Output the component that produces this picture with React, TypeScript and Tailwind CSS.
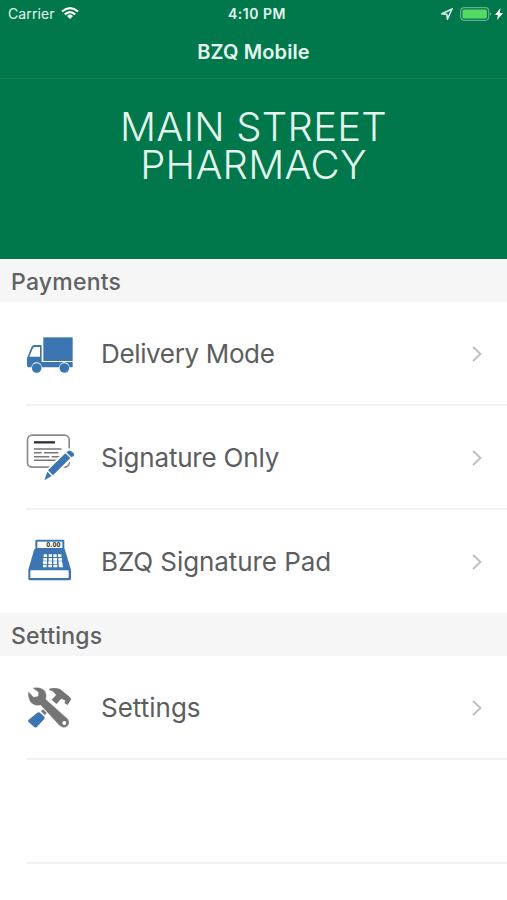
import React from "react";

const TruckIcon = () => (
  <svg viewBox="0 0 156 156" className="h-[52px] w-[52px]">
    <rect x="58" y="28" width="88" height="71" fill="#3b76b3" />
    <path
      d="M58 102H146V118H137C135 108 129 103 121 103C113 103 107 108 105 118H54C52 108 46 103 38 103C30 103 24 108 22 118H12L9 114V91L22 58Q25 51 31 51H50Q53 51 53 54V102Z"
      fill="#3b76b3"
    />
    <path d="M16 86L26 62Q28 57 32 57H48V86Z" fill="#fff" />
    <circle cx="38" cy="120" r="14.500" fill="#3b76b3" />
    <circle cx="121" cy="120" r="14.500" fill="#3b76b3" />
  </svg>
);

const SignatureIcon = () => (
  <svg viewBox="0 0 156 156" className="h-[52px] w-[52px]">
    <rect x="10.500" y="9.500" width="125" height="96" rx="14" fill="#fff" stroke="#8b8b8b" strokeWidth="5" />
    <path d="M30 31H93" stroke="#333" strokeWidth="7" />
    <path d="M30 51H112M30 62H53M60 62H103M30 74H76M83 74H108M30 85H101" stroke="#777" strokeWidth="4.500" />
    <path d="M59 145L69 115L128 53Q140 48 151 60Q155 68 149 75L84 136Z" fill="#fff" stroke="#fff" strokeWidth="5" />
    <path d="M61 145L70 119L83 132Z" fill="#3b76b3" />
    <path d="M72 115L124 64L139 78L87 130Z" fill="#3b76b3" />
    <path d="M127 61L134 56Q139 54 146 61Q153 67 149 72L142 76Z" fill="#3b76b3" />
  </svg>
);

const RegisterIcon = () => (
  <svg viewBox="0 0 156 156" className="h-[52px] w-[52px]">
    <rect x="34" y="11" width="87" height="32" rx="4" fill="#3b76b3" />
    <rect x="40" y="17" width="75" height="19" fill="#fff" />
    <text
      x="67"
      y="34"
      fontSize="20"
      fontWeight="700"
      fill="#333"
      textLength="43"
      lengthAdjust="spacingAndGlyphs"
      className="font-['DejaVu_Sans',sans-serif]"
    >
      0.00
    </text>
    <path d="M31 39H122L141 101V128Q141 133 136 133H18Q13 133 13 128V101Z" fill="#3b76b3" />
    <rect x="19" y="103" width="115" height="23" rx="2" fill="#fff" />
    <path
      d="M59 59H69M74 59H84M88 59H98M102 59H112M58 70H69M74 70H84M88 70H99M103 70H114M57 80H69M73 80H84M88 80H99M57 90H68M73 90H84M88 90H100"
      stroke="#fff"
      strokeWidth="8"
    />
    <path d="M103 76H114L117 94H105Z" fill="#fff" />
  </svg>
);

const ToolsIcon = () => (
  <svg viewBox="0 0 156 156" className="h-[52px] w-[52px]">
    <path
      d="M76 20Q92 15 108 21L130 39L134 42L142 51L131 69L122 64L123 55L112 50L97 66L83 53L96 39Q89 27 76 25Z"
      fill="#757575"
    />
    <path
      d="M25 18Q47 11 62 25Q71 38 66 52L132 111Q141 123 129 134Q118 141 107 132L50 70Q31 75 18 59Q9 44 13 28L29 45L42 42L43 31Z"
      fill="#757575"
      stroke="#fff"
      strokeWidth="1.500"
    />
    <circle cx="121" cy="123" r="6" fill="#fff" />
    <path d="M51 88L57 82L68 93L62 99Z" fill="#757575" />
    <path d="M38 94Q43 89 48 92L61 104Q64 108 60 112L38 136Q33 138 28 133L13 119Q11 116 14 113Z" fill="#3b76b3" />
  </svg>
);

const Chevron = () => (
  <svg viewBox="0 0 10 16" className="mt-px h-4 w-[10px]" fill="none" stroke="#bdbdbd" strokeWidth="1.800">
    <path d="M1 1L8.500 8L1 15" />
  </svg>
);

const payments = [
  { label: "Delivery Mode", icon: <TruckIcon />, text: "tracking-[-0.35px]" },
  { label: "Signature Only", icon: <SignatureIcon />, text: "tracking-[-0.2px]" },
  { label: "BZQ Signature Pad", icon: <RegisterIcon />, text: "tracking-[-0.08px]" },
];

const SectionHeader = ({ title }: { title: string }) => (
  <h2 className="flex h-[43px] items-center bg-[#f6f6f6] pt-[3px] pl-[11px] text-[23px] font-medium tracking-[0.22px] text-[#606163]">
    {title}
  </h2>
);

type RowProps = { label: string; icon: React.ReactNode; text?: string; last?: boolean };

const Row = ({ label, icon, text = "", last }: RowProps) => (
  <button className={`flex w-full pl-[26px] text-left ${last ? "h-[103px]" : "h-[104px]"}`}>
    <span className={`flex flex-1 border-[#f2f2f2] ${last ? "h-[103px]" : "h-[104px] border-b-2"}`}>
      <span className="-ml-0.5 flex h-[103px] w-[77px] shrink-0 items-center">{icon}</span>
      <span className="flex h-[102px] flex-1 items-center justify-between pr-[25px]">
        <span className={`text-[26px] whitespace-nowrap text-[#5c5d5f] ${text}`}>{label}</span>
        <Chevron />
      </span>
    </span>
  </button>
);

const App = () => {
  return (
    <div className="h-[900px] w-[507px] overflow-hidden bg-white font-['Inter',sans-serif]">
      <header className="h-[79px] border-b border-[#118255] bg-[#00784c] text-[#e5f5ed]">
        <div className="grid h-[27px] grid-cols-3 items-center pr-1 pl-2">
          <div className="flex items-center gap-[6px]">
            <span className="text-[14px] tracking-[0.1px]">Carrier</span>
            <svg viewBox="0 0 18 13" className="h-[13px] w-[18px]" fill="none" stroke="#fff" strokeWidth="2.200">
              <path d="M1 4.500Q9-2.200 17 4.500M3.800 7.300Q9 2.800 14.200 7.300" />
              <path d="M6 9Q9 6.200 12 9L9 12Z" fill="#fff" stroke="none" />
            </svg>
          </div>
          <span className="pl-[3px] text-center text-[14px] font-semibold tracking-[0.5px] whitespace-nowrap">4:10 PM</span>
          <div className="flex items-center justify-end">
            <svg viewBox="0 0 12 12" className="mr-[7px] h-3 w-3" fill="none" stroke="#e5f5ed" strokeWidth="1.500">
              <path d="M1 5.800L11 1L6.500 11L5.800 6.300Z" />
            </svg>
            <svg viewBox="0 0 33 14" className="h-[14px] w-[33px]">
              <rect x="0.700" y="0.700" width="28" height="12.600" rx="3.500" fill="none" stroke="#6aac8f" strokeWidth="1.200" />
              <rect x="2.500" y="2.500" width="24.400" height="9" rx="1.500" fill="#53db62" />
              <path d="M30 5Q32.500 7 30 9Z" fill="#6aac8f" />
            </svg>
            <svg viewBox="0 0 8 12" className="ml-0.5 h-3 w-2" fill="#fff">
              <path d="M5.500 0L0 7H3L2 12L8 5H4.800Z" />
            </svg>
          </div>
        </div>
        <h1 className="flex h-[49px] items-center justify-center pt-px text-[20px] font-semibold tracking-[0.1px]">BZQ Mobile</h1>
      </header>

      <p className="h-[180px] bg-[#00784c] pt-[29px] text-center text-[40px] leading-[38px] font-light tracking-[0.25px] text-[#e5f5ed]">
        MAIN STREET
        <br />
        PHARMACY
      </p>

      <SectionHeader title="Payments" />
      {payments.map((item, i) => (
        <Row key={item.label} {...item} last={i === payments.length - 1} />
      ))}

      <SectionHeader title="Settings" />
      <Row label="Settings" icon={<ToolsIcon />} />
      <div className="ml-[26px] h-[104px] border-b-2 border-[#f2f2f2]" />
    </div>
  );
};

export default App;
